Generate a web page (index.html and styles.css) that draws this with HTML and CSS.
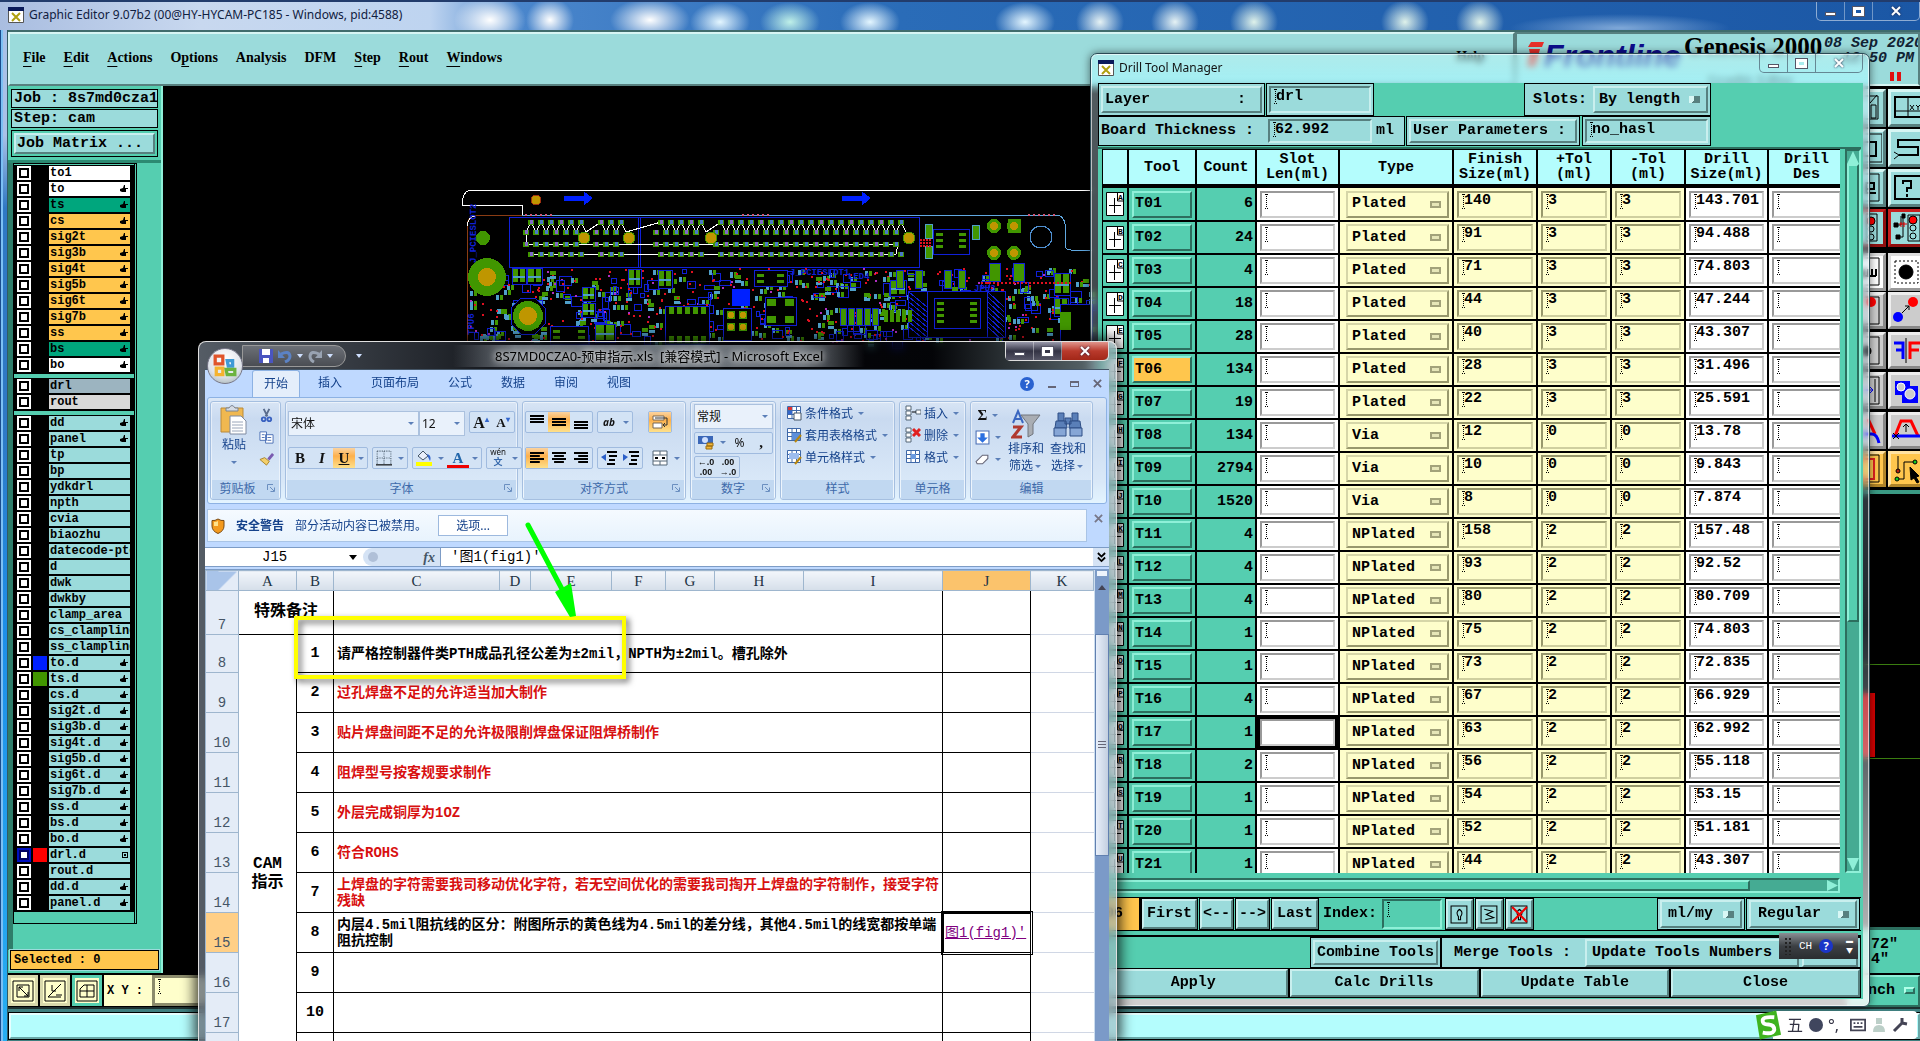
FILE: index.html
```html
<!DOCTYPE html>
<html lang="zh-CN">
<head>
<meta charset="utf-8">
<title>Graphic Editor</title>
<link rel="stylesheet" href="styles.css">
</head>
<body>
<svg class="defs" aria-hidden="true">
  <symbol id="app" viewBox="0 0 16 16"><path fill="#fff" stroke="#555" d="M.5.5h15v15H.5z"/><path fill="#0a1a5a" d="M0 0h16v4H0z"/><path stroke="#b0a010" stroke-width="2" d="M4 6l8 8M12 6l-8 8"/></symbol>
  <symbol id="hand" viewBox="0 0 8 8"><path d="M0 4l3-1 1-3h1v3h3v1H6v3H2L0 6z"/></symbol>
  <symbol id="launch" viewBox="0 0 8 8"><path fill="none" stroke="#6b8fc0" d="M.5 6V.5H6M3 3l4 4M7.500 3.500v4h-4"/></symbol>
  <symbol id="table" viewBox="0 0 16 16"><path fill="#fff" stroke="#3f68a8" d="M1.500 1.500h13v12h-13zM1.500 5.500h13M1.500 9.500h13M6 1.500v12M10.500 1.500v12"/></symbol>
  <symbol id="cross" viewBox="0 0 10 10"><path stroke="currentColor" stroke-width="2" d="M1 1l8 8M9 1L1 9"/></symbol>
</svg>

<main class="editor">
  <header class="titlebar">
    <svg class="app"><use href="#app"/></svg>
    <h1>Graphic Editor 9.07b2 (00@HY-HYCAM-PC185 - Windows, pid:4588)</h1>
    <div class="winctl"><button aria-label="Minimize"><i class="min"></i></button><button aria-label="Maximize"><i class="max"></i></button><button class="close" aria-label="Close"><svg><use href="#cross"/></svg></button></div>
  </header>
  <div class="menurow">
    <nav class="menubar">
      <button><u>F</u>ile</button><button><u>E</u>dit</button><button><u>A</u>ctions</button><button>O<u>p</u>tions</button><button>Analysis</button><button>DFM</button><button><u>S</u>tep</button><button><u>R</u>out</button><button><u>W</u>indows</button><button class="help">Help</button>
    </nav>
    <div class="brand">
      <span class="logo"><svg viewBox="0 0 18 26"><path fill="#e8302a" d="M5 0h13l-2 5H2zM3 7h11L9 25H1l3-13z"/></svg>Frontline</span>
      <span class="product"><b>Genesis 2000</b><small>Graphic Editor</small></span>
      <span class="clock">08 Sep 2020<br>&nbsp;&nbsp;12:50 PM<i></i></span>
    </div>
  </div>
  <div class="work">
    <aside class="left">
      <div class="job">
        <p>Job : 8s7md0cza1</p><p>Step: cam</p>
        <div><button>Job Matrix ...</button></div>
      </div>
      <div class="layerwrap"><div class="layers" id="layers"></div></div>
      <p class="selected">Selected : 0</p>
    </aside>
    <svg class="board" id="board" viewBox="163 86 1684 887" preserveAspectRatio="xMinYMin slice" shape-rendering="crispEdges"></svg>
    <form class="coords">
      <button type="button" aria-label="Snap"><svg viewBox="0 0 22 22"><path d="M1 1h20v20H1zM5 5h12v12H5zM7 7l9 9M7 11V7h4M16 12v4h-4"/></svg></button>
      <button type="button" aria-label="Angle"><svg viewBox="0 0 22 22"><path d="M1 1h20v20H1zM4 17L17 4M4 17h13M8 5v6h4M12 15h6"/></svg></button>
      <button type="button" class="on" aria-label="Grid"><svg viewBox="0 0 22 22"><path d="M1 1h20v20H1zM4 17V9l4-4h10v12zM4 11h14M11 5v12"/></svg></button>
      <label for="xy">X Y :</label><input id="xy" class="beam">
    </form>
    <aside class="right">
      <div class="tools">
        <button aria-label="Zoom"><svg viewBox="0 0 30 30"><path d="M3 3h23v23H3zM18 10l7-8M19 12h5v13h-5z"/></svg></button>
        <button aria-label="Grid XY"><svg viewBox="0 0 30 30"><path stroke-width="2" d="M3 4h26v20H3z"/><path d="M3 18h26M16 4v20M18 12l4 5M22 12l-4 5M24 12l2 2 2-2M26 14v3"/></svg></button>
        <button aria-label="Frame"><svg viewBox="0 0 30 30"><path d="M1 1h29v28H1z"/><path stroke-width="2" d="M10 9h14v14H10z"/></svg></button>
        <button aria-label="Measure"><svg viewBox="0 0 30 30"><path stroke-width="2" d="M28 7H6v7h20v8H7"/><path d="M29 2v5h-5M2 19l5 3-5 4"/></svg></button>
        <button aria-label="Edit"><svg viewBox="0 0 30 30"><path d="M1 1h26v27H1z"/><path stroke-width="2" d="M12 20h12M14 16h8V10h-8v10"/></svg></button>
        <button aria-label="Help"><svg viewBox="0 0 30 30"><path stroke-width="2" d="M3 3h26v23H3zM11 11V8h8v7h-4v4M15 21v3"/></svg></button>
        <button class="red" aria-label="Signals"><svg viewBox="0 0 30 30"><path d="M14 1h11v27H14z"/><circle cx="19" cy="8" r="4" fill="#f00"/><circle cx="19" cy="16" r="3"/><circle cx="19" cy="24" r="3"/></svg></button>
        <button class="red" aria-label="Net signals"><svg viewBox="0 0 30 30"><path d="M4 12h5V3M6 24h5V4M16 2h12v26H16z"/><path stroke="#d00" d="M7 11h8M9 14V9M12 14V9"/><path fill="#000" d="M2 10h4v4H2zM4 22h4v4H4zM10 1h3v4h-3z"/><circle cx="21" cy="7" r="4" fill="#f00"/><circle cx="21" cy="15" r="3"/><circle cx="21" cy="23" r="3"/></svg></button>
        <button class="white gap" aria-label="Text"><svg viewBox="0 0 30 30"><path d="M1 1h26v27H1z"/><path stroke-width="2" d="M4 19V12M8 19V12M12 19V12M16 19V12M20 19V12M24 19V12M4 19h20"/></svg></button>
        <button class="white gap" aria-label="Pad"><svg viewBox="0 0 30 30"><path stroke-dasharray="2 2" d="M3 4h23v22H3z"/><circle cx="14" cy="15" r="7" fill="#000"/></svg></button>
        <button class="gray" aria-label="Move"><svg viewBox="0 0 30 30"><path d="M1 1h26v27H1z"/><circle cx="19" cy="6" r="5" fill="#f00" stroke="none"/></svg></button>
        <button class="gray" aria-label="Copy"><svg viewBox="0 0 30 30"><path d="M10 17l7-7M13 10h4v4"/><circle cx="21" cy="6" r="5" fill="#f00" stroke="none"/><circle cx="6" cy="21" r="5" fill="#00f" stroke="none"/></svg></button>
        <button class="gray" aria-label="Rotate"><svg viewBox="0 0 30 30"><path d="M1 1h26v27H1z"/><circle cx="14" cy="15" r="5" fill="#000"/></svg></button>
        <button class="gray" aria-label="Mirror"><svg viewBox="0 0 30 30"><path d="M14 2v25"/><path stroke="#00f" stroke-width="3" d="M2 7h9v16M4 14h7"/><path stroke="#f00" stroke-width="3" d="M28 7H18v16M18 14h9"/></svg></button>
        <button class="gray" aria-label="Stretch"><svg viewBox="0 0 30 30"><path d="M1 1h26v27H1zM23 3v23"/><path stroke="#00f" d="M10 14h11M17 10l4 4-4 4"/></svg></button>
        <button class="gray" aria-label="Resize"><svg viewBox="0 0 30 30"><path fill="#00f" stroke="none" d="M3 5h15v5h8v17H10v-8H3z"/><circle cx="9" cy="11" r="4" fill="#ccc" stroke="#fff"/><circle cx="18" cy="18" r="5" fill="#ccc" stroke="#fff"/></svg></button>
        <button class="gray" aria-label="Curve"><svg viewBox="0 0 30 30"><path stroke="#f00" stroke-width="3" d="M16 3l7 15"/><path stroke="#00f" stroke-width="3" d="M10 18h10q5 0 7 9"/></svg></button>
        <button class="gray" aria-label="Bridge"><svg viewBox="0 0 30 30"><path stroke="#f00" stroke-width="3" d="M3 20L9 5h10l7 15"/><path stroke="#00f" stroke-width="3" d="M0 20h30"/><path d="M14 16V9M11 11l3-3 3 3M1 17l6 6M7 17l-6 6"/></svg></button>
        <button class="orange" aria-label="Select frame"><svg viewBox="0 0 30 30"><path d="M1 1h26v27H1z"/><path stroke="#e02020" stroke-width="2" d="M6 5h16v20H6z"/></svg></button>
        <button class="orange" aria-label="Select net"><svg viewBox="0 0 30 30"><path d="M6 2v15M5 25h7V8h10"/><circle cx="6" cy="17" r="2" fill="#b02010"/><circle cx="5" cy="25" r="2" fill="#1c2"/><circle cx="23" cy="8" r="2" fill="#1c2"/><path fill="#000" d="M18 13l9 9-3 1 3 5-2 1-3-5-3 2z"/></svg></button>
      </div>
      <svg class="rest" viewBox="0 0 73 433" preserveAspectRatio="xMinYMin slice"><path stroke="#3a7d10" d="M0 170.500h73M0 264.500h73"/><path fill="#d40000" d="M0 199h28v64H0z"/></svg>
      <div class="info"><p>72"<br>4"</p><button>nch <i></i></button></div>
    </aside>
  </div>
  <footer class="status"><div></div></footer>
</main>

<section class="drill" aria-label="Drill Tool Manager">
  <header class="titlebar">
    <svg class="app"><use href="#app"/></svg><h2>Drill Tool Manager</h2>
    <div class="winctl"><button aria-label="Minimize"><i class="min"></i></button><button aria-label="Maximize"><i class="max"></i></button><button class="close" aria-label="Close"><svg><use href="#cross"/></svg></button></div>
  </header>
  <div class="dbody">
    <div class="prow">
      <div class="box w168"><button class="btn full split"><span>Layer</span><span>:</span></button></div>
      <div class="box w108"><input class="beam" value="drl" aria-label="Layer"></div>
      <div class="box w187"><label for="slots">Slots:</label><select id="slots"><option>By length</option></select></div>
    </div>
    <div class="prow second">
      <div class="box w308"><label for="thick">Board Thickness :</label><input id="thick" class="beam" value="62.992"><span>ml</span></div>
      <div class="box w175"><button class="btn full">User Parameters :</button></div>
      <div class="box w132"><input class="beam" value="no_hasl" aria-label="User parameters"></div>
    </div>
    <div class="tablearea">
      <div class="clip">
        <table class="tt">
          <colgroup><col class="c1"><col class="c2"><col class="c3"><col class="c4"><col class="c5"><col class="c6"><col class="c7"><col class="c7"><col class="c4"><col class="c9"></colgroup>
          <thead><tr><th></th><th>Tool</th><th>Count</th><th>Slot<br>Len(ml)</th><th>Type</th><th>Finish<br>Size(ml)</th><th>+Tol<br>(ml)</th><th>-Tol<br>(ml)</th><th>Drill<br>Size(ml)</th><th>Drill<br>Des</th></tr></thead>
          <tbody id="toolrows"></tbody>
        </table>
      </div>
      <div class="vs"><b class="up"></b><b class="thumb"></b><b class="rail"></b><b class="down"></b></div>
      <div class="hs"><b class="thumb"></b><b class="rt"></b></div>
    </div>
    <div class="nav">
      <span class="cur">T06</span><button class="btn">First</button><button class="btn ar">&lt;--</button><button class="btn ar">--&gt;</button><button class="btn">Last</button>
      <label for="idx">Index:</label><input id="idx" class="beam">
      <button class="btn ic" aria-label="Light"><svg viewBox="0 0 18 18"><path d="M1 1h15v16H1zM9 4q-4 3-1 7v3h2v-3q3-4-1-7"/></svg></button>
      <button class="btn ic" aria-label="Undo"><svg viewBox="0 0 18 18"><path d="M1 1h15v16H1zM4 4l8 2-6 3 7 3-8 2"/></svg></button>
      <button class="btn ic" aria-label="Off"><svg viewBox="0 0 18 18"><path d="M1 1h15v16H1zM9 4q-4 3-1 7v3h2v-3q3-4-1-7"/><path stroke="#e00" stroke-width="2" d="M2 2l14 14M16 2L2 16"/></svg></button>
      <div class="box push"><select aria-label="Units"><option>ml/my</option></select></div>
      <div class="box reg"><select aria-label="Mode"><option>Regular</option></select></div>
    </div>
    <div class="merge"><div class="box w131"><button class="btn full">Combine Tools</button></div><div class="box mg"><span>Merge Tools :</span><button class="btn upd">Update Tools Numbers</button><button class="btn rest2" aria-label="More">&nbsp;</button></div></div>
    <div class="actions"><button class="btn">Apply</button><button class="btn">Calc Drills</button><button class="btn">Update Table</button><button class="btn">Close</button></div>
  </div>
</section>

<section class="excel" aria-label="Microsoft Excel">
  <header class="xtitle">
    <div class="qat">
      <svg viewBox="0 0 14 14"><path fill="#4a55c0" d="M0 0h14v14H0z"/><path fill="#fff" d="M3 0h8v6H3zM4 9h6v5H4z"/></svg>
      <svg viewBox="0 0 14 14"><path fill="none" stroke="#5b82c4" stroke-width="3" d="M3 5q8-4 9 2 0 4-5 6"/><path fill="#5b82c4" d="M0 1v8h7z"/></svg><i class="dn"></i>
      <svg viewBox="0 0 14 14"><path fill="none" stroke="#99a3b2" stroke-width="3" d="M11 5Q3 1 2 7q0 4 4 6"/><path fill="#99a3b2" d="M14 1v8H7z"/></svg><i class="dn"></i><i class="dn more"></i>
    </div>
    <h2>8S7MD0CZA0-预审指示.xls&nbsp; [兼容模式] - Microsoft Excel</h2>
    <div class="winctl"><button aria-label="Minimize"><i class="min"></i></button><button aria-label="Maximize"><i class="max"></i></button><button class="close" aria-label="Close"><svg><use href="#cross"/></svg></button></div>
  </header>
  <button class="orb" aria-label="Office"><svg viewBox="0 0 22 22"><g fill="none" stroke-width="3"><path stroke="#e0542a" d="M2 2h7v7H2z"/><path stroke="#3f9ad6" d="M13 6h5v5h-4z"/><path stroke="#f5b32e" d="M3 13h6v6H3z"/><path stroke="#6cb33f" d="M12 14h8v5h-7z"/></g></svg></button>
  <div class="xbody">
    <nav class="tabs"><button class="on">开始</button><button>插入</button><button>页面布局</button><button>公式</button><button>数据</button><button>审阅</button><button>视图</button>
      <span class="docctl"><i class="q">?</i><i class="m"></i><i class="r"></i><svg><use href="#cross"/></svg></span></nav>
    <div class="ribbon">
      <div class="grp g1"><div class="in">
        <button class="big paste"><svg viewBox="0 0 30 32"><path fill="#f0b850" stroke="#b98a3a" d="M2 4h22v24H2z"/><path fill="#d5dbe4" stroke="#7b8492" d="M7 7V4h3q3-5 6 0h3v3z"/><path fill="#fff" stroke="#7e8aa0" d="M11 12h11l5 5v13H11z"/><path stroke="#9aa6ba" d="M13 18h11M13 21h11M13 24h11M13 27h11"/></svg>粘贴<i class="dd"></i></button>
        <div class="stack"><button aria-label="剪切"><svg viewBox="0 0 16 16"><path stroke="#5a6c8c" stroke-width="2" d="M5 1l4 8M11 1L7 9"/><g fill="none" stroke="#3a62c0" stroke-width="2"><circle cx="5" cy="12" r="2"/><circle cx="11" cy="12" r="2"/></g></svg></button><button aria-label="复制"><svg viewBox="0 0 16 16"><path fill="#fff" stroke="#4a6fb5" d="M1 2h7v9H1zM7 5h8v9H7z"/><path stroke="#4a6fb5" d="M9 8h4M9 11h4M3 5h3M3 8h3"/></svg></button><button aria-label="格式刷"><svg viewBox="0 0 16 16"><path fill="#f3cf6a" stroke="#a8832b" d="M1 8l7 6 3-4-5-4z"/><path stroke="#7a5bb0" stroke-width="3" d="M10 8l5-6"/></svg></button></div>
      </div><p>剪贴板<svg><use href="#launch"/></svg></p></div>
      <div class="grp g2"><div class="in col">
        <div class="rw"><span class="combo f">宋体<i class="dd"></i></span><span class="combo s">12<i class="dd"></i></span><span class="set"><button class="ser g">A<sup>▴</sup></button><button class="ser k">A<sup>▾</sup></button></span></div>
        <div class="rw"><span class="set"><button class="ser">B</button><button class="ser it">I</button><button class="ser on un">U</button><button class="n"><i class="dd"></i></button></span>
          <span class="set"><button aria-label="边框"><svg viewBox="0 0 14 14"><path stroke="#567" stroke-dasharray="1 1" fill="none" d="M1 1h12v11M1 1v11M7 1v11M1 7h12"/><path stroke="#000" d="M0 13h14"/></svg></button><button class="n"><i class="dd"></i></button></span>
          <span class="set"><button aria-label="填充"><svg viewBox="0 0 16 16"><path fill="#e8eefa" stroke="#456" d="M2 6l5-5 5 5-5 4z"/><path fill="#36c" d="M11 4q5 1 3 7l-2-4z"/><path fill="#ff0" d="M0 12h16v4H0z"/></svg></button><button class="n"><i class="dd"></i></button><button class="ser fc">A</button><button class="n"><i class="dd"></i></button></span>
          <span class="set"><button class="wen"><span>wén</span><b>文</b></button><button class="n"><i class="dd"></i></button></span></div>
      </div><p>字体<svg><use href="#launch"/></svg></p></div>
      <div class="grp g3"><div class="in col">
        <div class="rw"><span class="set"><button class="ln t" aria-label="顶端对齐"><i></i></button><button class="ln on" aria-label="垂直居中"><i></i></button><button class="ln b" aria-label="底端对齐"><i></i></button></span><span class="set"><button class="or">ab</button><button class="n"><i class="dd"></i></button></span><span class="set solo"><button class="on" aria-label="自动换行"><svg viewBox="0 0 16 16"><path fill="#fff" stroke="#765" d="M1 2h11v4H1zM1 9h9v5H1z"/><path fill="none" stroke="#333" d="M3 4h12v7h-4M13 9l-2 2 2 2"/></svg></button></span></div>
        <div class="rw"><span class="set"><button class="ln on l5" aria-label="左对齐"><i></i></button><button class="ln l5 c" aria-label="居中"><i></i></button><button class="ln l5 r" aria-label="右对齐"><i></i></button></span><span class="set"><button aria-label="减少缩进"><svg viewBox="0 0 16 16"><path stroke="#000" stroke-width="2" d="M6 2h10M8 6h8M8 10h6M6 14h8"/><path fill="#2b5fc8" d="M5 4v7L0 7z"/></svg></button><button aria-label="增加缩进"><svg viewBox="0 0 16 16"><path stroke="#000" stroke-width="2" d="M6 2h10M8 6h8M8 10h6M6 14h8"/><path fill="#2b5fc8" d="M0 4v7l5-4z"/></svg></button></span><span class="set solo no2"><button aria-label="合并"><svg viewBox="0 0 16 16"><path fill="#fff" stroke="#567" d="M1 1h14v14H1zM1 5h14M1 11h14M8 1v4M8 11v4"/><path stroke="#000" stroke-width="2" d="M3 8h3M10 8h3"/></svg></button><button class="n"><i class="dd"></i></button></span></div>
      </div><p>对齐方式<svg><use href="#launch"/></svg></p></div>
      <div class="grp g4"><div class="in col tight">
        <span class="combo w">常规<i class="dd"></i></span>
        <span class="set wide"><button aria-label="货币"><svg viewBox="0 0 16 16"><path fill="#3b67b8" d="M0 1h15v8H0z"/><circle cx="7" cy="5" r="3" fill="#cfe0ff"/><path fill="#f1b73a" stroke="#9b6d10" d="M9 8h6v3H9zM8 11h6v3H8z"/></svg></button><button class="n"><i class="dd"></i></button><button>%</button><button class="ser">,</button></span>
        <span class="set fit"><button class="dec">←.0<br>.00</button><button class="dec">.00<br>→.0</button></span>
      </div><p>数字<svg><use href="#launch"/></svg></p></div>
      <div class="grp g5"><div class="in col list">
        <button><svg viewBox="0 0 16 16"><use href="#table"/><path fill="#d33" d="M2 2h4v3H2z"/><path fill="#36c" d="M2 6h4v3H2z"/><path fill="#fff" stroke="#456" d="M8 8h7v7H8z"/></svg>条件格式<i class="dd"></i></button>
        <button><svg viewBox="0 0 16 16"><use href="#table"/><path fill="#5d8fdb" d="M6 6h8v7H6z"/><path stroke="#b8860b" stroke-width="2" d="M9 15l6-7"/></svg>套用表格格式<i class="dd"></i></button>
        <button><svg viewBox="0 0 16 16"><use href="#table"/><path fill="#9dbdee" d="M3 4h10v6H3z"/><path stroke="#b8860b" stroke-width="2" d="M9 15l6-7"/></svg>单元格样式<i class="dd"></i></button>
      </div><p>样式</p></div>
      <div class="grp g6"><div class="in col list">
        <button><svg viewBox="0 0 16 16"><path fill="#fff" stroke="#567" d="M1 1h5v4H1zM1 6h5v4H1zM1 11h5v4H1zM11 5h5v4h-5z"/><path stroke="#000" d="M7 7h4"/></svg>插入<i class="dd"></i></button>
        <button><svg viewBox="0 0 16 16"><path fill="#fff" stroke="#567" d="M1 1h5v4H1zM1 6h5v4H1zM1 11h5v4H1z"/><path stroke="#e02020" stroke-width="3" d="M8 2l7 7M15 2L8 9"/></svg>删除<i class="dd"></i></button>
        <button><svg viewBox="0 0 16 16"><use href="#table"/><path fill="#6b9be0" d="M6 5h5v5H6z"/></svg>格式<i class="dd"></i></button>
      </div><p>单元格</p></div>
      <div class="grp g7"><div class="in">
        <div class="stack ed"><button class="ser">Σ<i class="dd"></i></button><button aria-label="填充"><svg viewBox="0 0 14 14"><path fill="#fff" stroke="#4a6fb5" d="M1 1h12v12H1z"/><path fill="#2b6fe0" d="M5 3h4v4h3l-5 5-5-5h3z"/></svg><i class="dd"></i></button><button aria-label="清除"><svg viewBox="0 0 14 14"><path fill="#fff" stroke="#667" d="M1 9l6-6h5v3l-5 5H2z"/></svg><i class="dd"></i></button></div>
        <button class="big"><svg viewBox="0 0 30 30"><path fill="none" stroke="#3b67c0" stroke-width="2" d="M2 14L7 2l5 12M4 10h6"/><path fill="none" stroke="#b03a30" stroke-width="3" d="M2 18h8L2 28h9"/><path fill="#a9adb3" stroke="#70757c" d="M10 6h19l-7 9v10l-5 3V15z"/></svg>排序和<br>筛选<i class="dd"></i></button>
        <button class="big"><svg viewBox="0 0 30 30"><g fill="#5a7fb8" stroke="#2f4f86"><path d="M5 4h6v8H5zM19 4h6v8h-6z"/><path d="M3 12h10l1 7H2zM17 12h10l1 7H16zM12 9h6v6h-6z"/><path fill="#86a6d6" d="M1 19h12v8H1zM17 19h12v8H17z"/></g></svg>查找和<br>选择<i class="dd"></i></button>
      </div><p>编辑</p></div>
    </div>
    <div class="warn"><div><svg viewBox="0 0 14 16"><path fill="#f39a1e" stroke="#7a4a10" d="M7 1q3 2 6 1.500V8q0 5-6 7.500Q1 13 1 8V2.500Q4 3 7 1z"/><path fill="#ffe28a" d="M3 4q3 0 4-1v5H3z"/></svg><b>安全警告</b><span>部分活动内容已被禁用。</span><button>选项...</button></div><svg class="x"><use href="#cross"/></svg></div>
    <div class="fbar"><span class="name">J15<i></i></span><span class="fx"><b></b><em>fx</em></span><input value="'图1(fig1)'" aria-label="编辑栏"><button aria-label="展开"><svg viewBox="0 0 10 12"><path stroke="#000" stroke-width="2" d="M1 1l4 4 4-4M1 6l4 4 4-4"/></svg></button></div>
    <div class="sheetwrap">
      <table class="sheet">
        <colgroup><col class="k0"><col class="ka"><col class="kb"><col class="kc"><col class="kd"><col class="ke"><col class="kf"><col class="kg"><col class="kh"><col class="ki"><col class="kj"><col class="kk"></colgroup>
        <thead><tr><th class="cn"></th><th>A</th><th>B</th><th>C</th><th>D</th><th>E</th><th>F</th><th>G</th><th>H</th><th>I</th><th class="hot">J</th><th>K</th></tr></thead>
        <tbody>
          <tr class="h44"><th>7</th><td colspan="2" class="cap">特殊备注</td><td colspan="7"></td><td></td><td class="off"></td></tr>
          <tr class="h38"><th>8</th><td rowspan="12" class="cap cam">CAM<br>指示</td><td class="no">1</td><td colspan="7">请严格控制器件类PTH成品孔径公差为±2mil，NPTH为±2mil。槽孔除外</td><td></td><td class="off"></td></tr>
          <tr><th>9</th><td class="no">2</td><td colspan="7" class="rd">过孔焊盘不足的允许适当加大制作</td><td></td><td class="off"></td></tr>
          <tr><th>10</th><td class="no">3</td><td colspan="7" class="rd">贴片焊盘间距不足的允许极限削焊盘保证阻焊桥制作</td><td></td><td class="off"></td></tr>
          <tr><th>11</th><td class="no">4</td><td colspan="7" class="rd">阻焊型号按客规要求制作</td><td></td><td class="off"></td></tr>
          <tr><th>12</th><td class="no">5</td><td colspan="7" class="rd">外层完成铜厚为1OZ</td><td></td><td class="off"></td></tr>
          <tr><th>13</th><td class="no">6</td><td colspan="7" class="rd">符合ROHS</td><td></td><td class="off"></td></tr>
          <tr><th>14</th><td class="no">7</td><td colspan="7" class="rd">上焊盘的字符需要我司移动优化字符，若无空间优化的需要我司掏开上焊盘的字符制作，接受字符<br>残缺</td><td></td><td class="off"></td></tr>
          <tr><th class="hot">15</th><td class="no">8</td><td colspan="7">内层4.5mil阻抗线的区分：附图所示的黄色线为4.5mil的差分线，其他4.5mil的线宽都按单端<br>阻抗控制</td><td class="act"><a href="#fig1">图1(fig1)'</a></td><td class="off"></td></tr>
          <tr><th>16</th><td class="no">9</td><td colspan="7"></td><td></td><td class="off"></td></tr>
          <tr><th>17</th><td class="no">10</td><td colspan="7"></td><td></td><td class="off"></td></tr>
          <tr><th></th><td class="no"></td><td colspan="7"></td><td></td><td class="off"></td></tr>
          <tr><th></th><td class="no"></td><td colspan="7"></td><td></td><td class="off"></td></tr>
        </tbody>
      </table>
      <div class="xs"><b class="split"></b><i></i><b class="th"></b></div>
    </div>
  </div>
</section>

<div class="mark"></div>
<svg class="arrow" viewBox="0 0 60 100"><path stroke="#0f0" stroke-width="5" stroke-linecap="round" d="M10 7l35 66"/><path fill="#0f0" d="M37 74l16-9 5 33-6 1z"/></svg>

<div class="lang"><i class="grip"></i><span>CH</span><b>?</b><em>▬<br>▼</em></div>
<div class="ime"><svg class="s" viewBox="0 0 28 30"><path fill="#3fb31f" d="M1 5L22 0l5 25L5 30z"/><path fill="none" stroke="#fff" stroke-width="4" d="M20 7q-13-1-12 4 0 3 6 3.500T20 20q-1 5-12 3"/></svg><span>五</span><i class="moon"></i><span>°,</span><svg viewBox="0 0 18 14"><path fill="none" stroke="#445" stroke-width="2" d="M1 1h16v12H1zM4 5h2M8 5h2M12 5h2M4 9h10"/></svg><svg viewBox="0 0 14 16"><path fill="#bccfc8" d="M4 1h6v6H4zM1 15q0-7 6-7t6 7z"/></svg><svg viewBox="0 0 16 16"><path fill="none" stroke="#445" stroke-width="3" d="M2 14l8-8M10 1v5l5 1"/></svg></div>
<script src="app.js"></script>
</body>
</html>
```

FILE: styles.css
```css
*{box-sizing:border-box}
:root{--teal:#55ceb0;--cyan:#9bdbdb;--pale:#fefecb;--ice:#b4fdfd;--gold:#ffc64d;--mono:"Liberation Mono","Noto Sans CJK SC",monospace;--ui:"Noto Sans","Noto Sans CJK SC",sans-serif}
html,body{height:100%}
body{margin:0;overflow:hidden;background:#1d5fae;font:bold 15px/18px var(--mono);color:#000}
button,input,select{font:inherit;color:inherit;margin:0;padding:0;border:0;border-radius:0;background:none;appearance:none;outline:0;min-width:0}
h1,h2,p{margin:0;font:inherit}
svg{fill:none;display:block;flex:none}
.defs{position:absolute;width:0;height:0}
.titlebar{display:flex;align-items:center;flex:none;font:12px/16px var(--ui);color:#111}
.titlebar .app{width:16px;height:16px;margin-right:5px}
.winctl{display:flex;margin-left:auto;align-self:flex-start;height:19px;border:1px solid #ffffff80;border-top:0;border-radius:0 0 5px 5px}
.winctl button{width:28px;display:flex;align-items:center;justify-content:center;border-right:1px solid #ffffff60}
.winctl .close{width:46px;border:0}
.winctl svg{width:10px;height:10px;color:#fff;filter:drop-shadow(0 0 1px #224)}
.min{width:11px;height:4px;background:#fff;border:1px solid #556;margin-top:6px}
.max{width:11px;height:9px;border:3px solid #fff;outline:1px solid #556}

.editor{height:100%;display:flex;flex-direction:column;padding-left:8px;overflow:hidden;background:linear-gradient(90deg,#1a4c8e 0 1px,#7cc0f4 1px 3px,transparent 3px 7px,#315a63 7px 8px,transparent 8px),linear-gradient(#a9c1e8 0 13%,#2f78c4 20% 40%,#1e8ee8 60%,#27aef2 100%)}
.editor>.titlebar{height:30px;margin-left:-8px;padding:0 0 2px 8px;border-top:2px solid #223c6c;background:radial-gradient(ellipse 24px 22px at 1100px 20px,#e6f2f4,transparent),radial-gradient(ellipse 24px 22px at 1175px 20px,#e6f2f4,transparent),radial-gradient(ellipse 24px 22px at 1254px 20px,#dff2ea,transparent),radial-gradient(ellipse 24px 22px at 1405px 20px,#dff2ea,transparent),radial-gradient(ellipse 24px 22px at 1480px 20px,#dff2ea,transparent),radial-gradient(ellipse 110px 14px at 1620px 26px,#7fa8d8,transparent),radial-gradient(ellipse 40px 22px at 650px 18px,#fff,transparent),radial-gradient(ellipse 30px 20px at 1025px 20px,#e4f6ff,transparent),radial-gradient(ellipse 30px 20px at 870px 20px,#e4f6ff,transparent),radial-gradient(ellipse 30px 20px at 790px 20px,#bff0e8,transparent),radial-gradient(ellipse 30px 20px at 720px 20px,#e4f6ff,transparent),radial-gradient(ellipse 24px 22px at 550px 18px,#fff,transparent),radial-gradient(ellipse 36px 24px at 490px 18px,#fff,transparent),linear-gradient(90deg,#a9bde0,#c8d8ef 200px,#bed4f0 430px,#4a86cc 520px,#2a6cb8 900px,#1b57a5)}
.editor>.titlebar h1{color:#102040}
.menurow{display:flex;height:56px;flex:none;background:var(--cyan);border-top:2px solid #3f6c6c;font:bold 14px/18px "Liberation Serif",serif}
.menubar{flex:1;display:flex;align-items:center;gap:18px;padding:0 0 3px 13px;border:2px solid;border-color:#d6f5f3 #57807f #57807f #d6f5f3}
.menubar button{text-underline-offset:4px}
.menubar .help{margin:14px 28px 0 auto;align-self:flex-start}
.brand{width:405px;display:flex;border:2px solid;border-color:#57807f #57807f #d6f5f3 #57807f;padding:4px 0 0 9px;white-space:nowrap;overflow:hidden}
.logo{display:flex;font:italic bold 32px/36px "Liberation Sans",sans-serif;color:#0d0d8c;width:158px;flex:none}
.logo svg{width:18px;height:26px;margin-top:4px}
.product{display:flex;flex-direction:column;width:140px;flex:none}
.product b{font-size:25px;line-height:18px}
.product small{font-size:13px;line-height:16px;padding:16px 0 0 24px}
.clock{font:italic bold 15px/15px var(--mono);color:#123;margin-top:-2px}
.clock i{display:block;width:11px;height:9px;margin:6px 0 0 66px;border:solid #e01010;border-width:0 4px}
.work{flex:1;min-height:0;display:grid;grid-template:minmax(0,1fr) 34px/155px minmax(0,1fr) 73px;background:#000}
.left{background:var(--teal);display:flex;flex-direction:column;min-height:0;border-right:2px solid #8ff0d8}
.job{padding:3px;border-bottom:3px solid #2c8a72}
.job p,.job div{border:1px solid #000;background:var(--cyan);height:19px;padding-left:2px;white-space:nowrap;overflow:hidden}
.job p+p{margin-top:1px}
.job div{background:var(--teal);height:27px;margin-top:2px;padding:2px}
.job button{width:100%;height:100%;background:var(--cyan);border:2px solid;border-color:#c9efee #57807f #57807f #c9efee;text-align:left;padding-left:1px}
.layerwrap{flex:1;border-left:5px solid #2f7d6a}
.layers{width:124px;height:761px;border:1px solid #000;border-right:3px double #000;padding:1px 0;display:flex;flex-direction:column;gap:4px;font-size:12px;line-height:14px}
.grpx{background:#000;padding:1px 0 0}
.layer{display:grid;grid-template-columns:14px 16px 81px;gap:1px;padding:0 3px 2px;height:16px;background:#000}
.layer input{width:14px;height:14px;background:#fff;border:2px solid #fff;box-shadow:inset 0 0 0 2px #000}
.layer input:checked{border-color:#0010c0;box-shadow:inset 0 0 0 2px #000060}
.layer i{margin:0 1px;background:var(--sw,#000)}
.layer span{background:var(--bg,var(--cyan));display:flex;justify-content:space-between;align-items:center;overflow:hidden;white-space:nowrap;padding-left:1px}
.layer svg{width:8px;height:8px;fill:#000;margin-right:2px}
.layer b.sq{width:6px;height:6px;border:3px double #000;margin-right:2px}
.selected{margin:0 2px 3px 2px;background:var(--gold);border:1px solid #000;outline:1px solid var(--cyan);height:20px;padding-left:3px;font-size:12px}
.board{grid-area:1/2;width:100%;height:100%}
.coords{grid-area:2/1/3/3;display:flex;background:var(--pale);width:400px;border-top:2px solid #000;border-bottom:1px solid #000;align-items:stretch;font-size:12px}
.coords button{width:32px;border-right:2px solid #000;display:grid;place-items:center;box-shadow:inset 0 0 0 3px #d8d8ac}
.coords button.on{box-shadow:inset 0 0 0 3px var(--teal)}
.coords svg{width:22px;height:22px;stroke:#000}
.coords label{padding:7px 0 0 3px;width:48px}
.coords input{width:150px;border:3px solid #8c8c6c}
.right{grid-area:1/3/3/4;display:flex;flex-direction:column;overflow:hidden;min-height:0}
.tools{display:grid;grid-template-columns:38px 38px;grid-auto-rows:38px;gap:2px;background:#000;padding:3px 0 3px 1px;border-bottom:4px solid #3a9a84;flex:none}
.tools button{background:var(--cyan);border:3px solid;border-color:#d6f5f3 #57807f #57807f #d6f5f3;display:grid;place-items:center}
.tools svg{width:30px;height:30px;stroke:#000}
.tools .red{border-color:#c82020 #901010 #901010 #c82020}
.tools .white{background:#fff;border-color:#ddd #999 #999 #ddd}
.tools .gap{margin-top:4px;height:38px}
.tools .gray{background:#ccc;border-color:#eee #888 #888 #eee;margin-top:3px;height:37px}
.tools .orange{background:var(--gold);border-color:#ffe2a0 #b08428 #b08428 #ffe2a0;margin-top:2px}
.rest{flex:1;width:100%;min-height:0}
.info{height:80px;flex:none;background:var(--teal);border-top:3px solid #2c6e5e;text-align:left}
.info p{height:45px;padding:7px 0 0 24px;line-height:15px;border-bottom:2px solid #000}
.info button{width:100%;height:32px;border:2px solid;border-color:#8ff0d8 #2c6e5e #2c6e5e #8ff0d8;padding-left:19px;text-align:left;white-space:nowrap}
.info i{display:inline-block;width:11px;height:7px;border:2px solid;border-color:#b0ffe8 #2c6e5e #2c6e5e #b0ffe8}
.status{height:34px;flex:none;background:#3f7f7f;padding:4px 0 2px 1px;border-top:2px solid #1d3030}
.status div{height:100%;background:var(--ice);border:2px solid;border-color:#e6ffff #6aa8a8 #6aa8a8 #e6ffff;outline:1px solid #000}

.drill{position:absolute;left:1090px;top:53px;width:780px;height:954px;display:flex;flex-direction:column;padding:0 6px 7px 7px;border-radius:7px 7px 6px 6px;border:1px solid #2b4a55;background:linear-gradient(#c8ffff70,#a8f8ffb0 28px,#d8f4ff60 40px,#80a8c040 60%,#ffffffd0 99%);backdrop-filter:blur(3px);box-shadow:inset 0 0 0 1px #ffffffa0,0 0 8px #0008}
.drill>.titlebar{height:29px;padding-bottom:2px}
.drill h2{font-size:12px}
.drill .winctl,.drill .winctl button{border-color:#456a}
.dbody{flex:1;min-height:0;background:var(--teal);display:flex;flex-direction:column;padding:0 2px 1px 0;overflow:hidden}
.beam{background-image:repeating-linear-gradient(#000 0 1px,transparent 1px 2px),linear-gradient(90deg,#000 1px,transparent 1px 2px,#000 2px),linear-gradient(90deg,#000 1px,transparent 1px 2px,#000 2px);background-size:1px 14px,3px 1px,3px 1px;background-position:4px 1px,3px 1px,3px 15px;background-repeat:no-repeat;padding-left:5px}
.prow{display:flex;height:33px;flex:none}
.prow.second{height:30px}
.box{border:1px solid #000;background:var(--cyan);display:flex;align-items:center;padding:2px;flex:none}
.prow .box+.box{margin-left:1px}
.w168{width:167px}.w108{width:108px}.w187{width:187px}.w308{width:307px}.w175{width:174px}.w132{width:129px}.w131{width:131px}
.second .box+.w132{margin-left:2px}
.prow .box+.w187{margin-left:150px;padding-left:8px}
.box label{white-space:nowrap}
.btn{background:var(--cyan);border:2px solid;border-color:#c9efee #57807f #57807f #c9efee;height:28px;padding:0 3px;text-align:center;white-space:nowrap;overflow:hidden}
.full{width:100%;height:100%;text-align:left;padding:0 2px}
.full.split{display:flex;justify-content:space-between;align-items:center;padding-right:14px}
.prow input{width:100%;height:27px;border:2px solid;border-color:#57807f #c9efee #c9efee #57807f;padding-bottom:7px}
.second input{height:24px;padding-bottom:3px}
.w308 label{width:167px;flex:none}
.w308 .beam{width:104px}
.w308 span{padding-left:4px}
select{background:conic-gradient(#57807f 0 62%,#d8f7f5 0) calc(100% - 6px) 50%/11px 7px no-repeat var(--cyan);border:2px solid;border-color:#c9efee #57807f #57807f #c9efee;height:27px;padding:0 18px 0 4px}
.w187 select{flex:1;margin-left:6px}
.tablearea{flex:none;height:748px;margin-top:1px;display:grid;grid-template:724px 15px/738px 16px;column-gap:5px;row-gap:5px;padding-left:4px;border-top:2px solid #2c6e5e}
.clip{overflow:hidden;background:#000}
.tt{border-collapse:separate;border-spacing:0;table-layout:fixed;width:743px;margin-left:1px;background:var(--teal)}
.c1{width:26px}.c2{width:68px}.c3{width:60px}.c4{width:83px}.c5{width:114px}.c6{width:84px}.c7{width:74px}.c9{width:77px}
.tt th{height:37px;background:var(--ice);padding:0 2px;border-right:2px solid #000;border-bottom:2px solid #000;border-top:1px solid #000;line-height:15px}
.tt td{height:33px;padding:2px 3px;border-right:2px solid #000;border-bottom:2px solid #000;overflow:hidden}
.tt tbody tr:first-child td{border-top:2px solid #000;height:36px}
.tt td.n{text-align:right;padding-right:2px}
.tt td button{width:100%;height:27px;border:2px solid;border-color:#8ff0d8 #2c6e5e #2c6e5e #8ff0d8;text-align:left;padding-left:1px;display:block}
.tt td button.sel{background:var(--gold)}
.tt input{display:block;width:100%;height:27px;border:2px solid;border-color:#999 #ccc #ccc #999;padding-bottom:8px}
.tt .w{background-color:#fff}.tt .y{background:var(--pale)}
.tt .y input{border-color:#98986c #cfcf9f #cfcf9f #98986c}
.tt .foc{background-color:#000}.tt .foc input{background:#fff}
.tt .ty{padding-left:6px}
.tt select{display:block;width:100%;height:27px;background:linear-gradient(#e6e6b8,#e6e6b8) calc(100% - 8px) 50%/7px 3px no-repeat,linear-gradient(#a2a27a,#a2a27a) calc(100% - 6px) 50%/11px 7px no-repeat var(--pale);border-color:#d6d6a8 #98986c #98986c #d6d6a8}
.tt svg{width:18px;height:24px}
.vs,.hs{border:2px solid;border-color:#2c6e5e #8ff0d8 #8ff0d8 #2c6e5e;background:#45ab93;display:flex}
.vs{flex-direction:column}
.vs b,.hs b{display:block}
.vs .thumb{height:458px;background:var(--teal);border:2px solid;border-color:#8ff0d8 #2c6e5e #2c6e5e #8ff0d8}
.vs .rail{flex:1}
.up,.down{height:13px;background:#8ff0d8;clip-path:polygon(50% 0,100% 100%,0 100%)}
.down{clip-path:polygon(0 0,100% 0,50% 100%)}
.hs .thumb{width:646px;background:var(--teal);border:2px solid;border-color:#8ff0d8 #2c6e5e #2c6e5e #8ff0d8}
.hs .rt{width:11px;margin-left:auto;background:#8ff0d8;clip-path:polygon(0 0,100% 50%,0 100%)}
.nav{display:flex;align-items:center;height:34px;flex:none;margin:2px 0 0 2px;border:1px solid #000;border-right:0}
.nav .cur{width:40px;background:var(--gold);height:100%;padding:7px 16px 0 0;display:flex;justify-content:flex-end;border-right:2px solid #000}
.nav .btn{margin-left:1px;outline:1px solid #000;height:30px;margin-right:2px}
.nav .ar{width:33px;padding:0}
.nav label{padding:0 5px 0 3px}
.nav input{width:60px;height:30px;border:2px solid;border-color:#2c6e5e #8ff0d8 #8ff0d8 #2c6e5e;margin-right:3px}
.nav .ic{width:27px;padding:0 2px}
.nav .ic svg{width:19px;height:19px;stroke:#000}
.nav .box{height:32px;margin-right:1px}
.nav .box select{width:100%;height:28px}
.push{margin-left:auto;width:88px}
.reg{width:114px}
.nav .push select{padding-left:6px}
.nav .reg select{padding-left:7px}
.merge{display:flex;justify-content:flex-end;margin-top:4px;height:33px;flex:none;border-top:2px solid #000}
.mg{width:420px}
.mg span{padding-left:10px}.mg .upd{margin:0 3px 0 14px;width:214px;padding:0 5px;text-align:left}
.rest2{flex:1}
.actions{display:grid;grid-template-columns:repeat(4,1fr);gap:2px;background:#000;border:1px solid #000;height:30px;flex:none}

.excel{position:absolute;left:198px;top:341px;width:919px;bottom:0;display:flex;flex-direction:column;padding:0 7px 0 6px;border:1px solid #e0e0e0;border-bottom:0;border-radius:8px 8px 0 0;font:12px/17px var(--ui);background:linear-gradient(90deg,#68717cd0,#20242cb0 300px,#0a0c1480 400px,#0a0c1460 80%,#a0b8c0a0);backdrop-filter:blur(4px);box-shadow:0 0 14px 3px #000c}
.xtitle{height:27px;flex:none;display:flex;align-items:center}
.xtitle h2{font-size:13px;line-height:22px;margin-left:107px;padding:0 42px;color:#000;background:linear-gradient(90deg,transparent,#8a929ac0 15% 85%,transparent);text-shadow:0 0 6px #fff,0 0 8px #ddd}
.qat{display:flex;align-items:center;gap:5px;height:22px;margin-left:37px;padding:0 12px 0 16px;width:104px;border-radius:0 12px 12px 0;border:1px solid #999;background:linear-gradient(#6c7077,#4a4d53)}
.qat svg{width:14px;height:14px}
.dn{width:0;height:0;border:3px solid transparent;border-top:4px solid #cfe0ff;border-bottom:0;flex:none}
.dn.more{margin-left:18px}
.excel .winctl{border-color:#ddd}
.excel .winctl button{background:linear-gradient(#99a,#334 50%,#556)}
.excel .winctl .close{background:linear-gradient(#e0958c,#b93a2c 50%,#a22718);border-radius:0 0 5px 0}
.orb{position:absolute;left:8px;top:6px;width:36px;height:36px;border-radius:50%;background:radial-gradient(circle at 50% 30%,#fff,#dfe3ea 60%,#9aa);display:grid;place-items:center;border:1px solid #778;z-index:1}
.orb svg{width:24px;height:24px}
.xbody{flex:1;min-height:0;display:flex;flex-direction:column;background:#bfd9ff;border-top:1px solid #456;overflow:hidden}
.tabs{display:flex;height:27px;flex:none;padding-left:47px;gap:7px;color:#15428b}
.tabs button{height:27px;padding:0 11px 2px}
.tabs button.on{background:#e4eefb;border:1px solid #8db2e3;border-bottom:0;border-radius:3px 3px 0 0}
.docctl{margin-left:auto;display:flex;align-items:center;gap:14px;padding-right:7px;color:#667}
.docctl .q{width:14px;height:14px;border-radius:50%;background:#2a62d0;color:#fff;font:bold 11px/14px var(--ui);text-align:center}
.docctl .m{width:8px;height:2px;background:#667;margin-top:6px}
.docctl .r{width:9px;height:6px;border:1px solid #667;border-top-width:2px}
.docctl svg{width:9px;height:9px}
.ribbon{display:flex;gap:4px;height:107px;flex:none;padding:3px 13px 3px 2px;border:1px solid #8db2e3;border-radius:3px;background:linear-gradient(#dbe7f6,#c9daf0 20%,#d9e8f8 80%,#e3f4ff);margin:0 2px}
.grp{display:flex;flex-direction:column;border:1px solid #a5bfe0;border-radius:3px;box-shadow:inset 0 0 0 1px #ffffff80;flex:none}
.g1{width:71px}.g2{width:233px}.g3{width:164px}.g4{width:86px}.g5{width:115px}.g6{width:67px}.g7{width:123px}
.grp>p{height:19px;background:#c1d8f1;color:#3e6aaa;text-align:center;position:relative;line-height:18px;margin:0 1px}
.g1>p{padding-right:16px}
.grp>p svg{position:absolute;right:4px;top:4px;width:8px;height:8px}
.in{flex:1;display:flex;padding:2px;color:#15428b;min-height:0}
.in.col{flex-direction:column;padding:9px 2px 11px;justify-content:space-between}
.in.tight{padding:2px 3px}
.in.list{padding:0 2px 12px 5px}
.list button{display:flex;align-items:center;gap:3px;height:22px;white-space:nowrap}
.list svg{width:16px;height:16px}
.dd{display:inline-block;width:0;height:0;border:3px solid transparent;border-top:3px solid #5b7fb8;border-bottom:0;flex:none;margin:0 2px;vertical-align:middle}
.big{display:flex;flex-direction:column;align-items:center;width:42px;line-height:17px}
.big svg{width:30px;height:32px;flex:none}
.g7 .big{display:block;text-align:center;white-space:nowrap}
.g7 .big svg{margin:0 auto}
.paste .dd{margin-top:8px}
.stack{display:flex;flex-direction:column;width:22px;align-items:center}
.stack button{height:22px;display:flex;align-items:center;gap:3px}
.stack svg{width:15px;height:15px}
.ed{width:32px}
.rw{display:flex;gap:4px;height:22px}
.combo{background:#e9f1fb;border:1px solid #abc1de;color:#111;height:25px;display:flex;align-items:center;justify-content:space-between;padding:0 2px}
.combo.f{width:131px}.combo.s{width:46px;margin-left:-4px}.combo.w{width:79px}
.set{display:flex;border:1px solid #a0bbdf;border-radius:2px;height:22px;background:#d3e3f5}
.set button{width:22px;display:grid;place-items:center;color:#111}
.set .n{width:12px}
.set svg{width:16px;height:16px}
.set .on{background:linear-gradient(#fbd3a0,#fdb04c 40%,#fee08a)}
.ser{font-family:"Liberation Serif",serif;font-weight:bold;font-size:15px;color:#111}
.ser sup{font-size:8px;line-height:0;color:#36c}
.set .g,.set .k{display:block}
.g{font-size:16px}.k{font-size:13px}
.it{font-style:italic}.un{text-decoration:underline}
.set .fc{box-shadow:inset 0 -3px #e00;color:#26a;line-height:14px}
.set .wen{font-size:8px;line-height:8px;display:flex;flex-direction:column;align-items:center;justify-content:center}
.wen b{color:#36a;font-size:9px;line-height:12px}
.or{font:italic bold 10px/12px var(--ui)}
.ln i{width:14px;height:8px;background:repeating-linear-gradient(#000 0 2px,transparent 2px 3px)}
.ln.t i{margin-bottom:6px}.ln.b i{margin-top:6px}
.ln.l5 i{height:12px;clip-path:polygon(0 0,100% 0,100% 25%,70% 25%,70% 50%,100% 50%,100% 75%,70% 75%,70% 100%,0 100%)}
.ln.c i{clip-path:polygon(0 0,100% 0,100% 25%,85% 25%,85% 50%,100% 50%,100% 75%,85% 75%,85% 100%,15% 100%,15% 75%,0 75%,0 50%,15% 50%,15% 25%,0 25%)}
.ln.r i{clip-path:polygon(0 0,100% 0,100% 100%,30% 100%,30% 75%,0 75%,0 50%,30% 50%,30% 25%,0 25%)}
.solo{margin-left:auto;margin-right:11px}
.no2{border:0;background:none;margin-right:0}
.wide{width:79px;justify-content:space-between}
.fit{width:46px}
.set .dec{font:bold 9px/10px "Liberation Sans",sans-serif;display:block}
.warn{display:flex;height:43px;flex:none;padding:5px 0 5px 2px}
.warn>div{width:880px;height:33px;display:flex;align-items:center;background:linear-gradient(#f5faff,#e8f3fd);border:1px solid #a9c4e6;color:#15428b;padding-left:3px}
.warn div svg{width:14px;height:16px;margin-right:11px}
.warn span{margin:0 11px}
.warn button{width:70px;height:21px;background:#fff;border:1px solid #9db9de;line-height:17px}
.warn .x{width:9px;height:9px;margin:5px 0 0 7px;color:#778}
.fbar{display:flex;height:20px;flex:none;border:solid #7d9cc6;border-width:1px 0;background:#fff;font:14px/17px var(--mono)}
.fbar .name{width:158px;display:flex;padding:0 6px 0 57px;justify-content:space-between;align-items:center}
.fbar .name i{border:4px solid transparent;border-top:5px solid #000;border-bottom:0}
.fx{width:78px;background:#d5e3f5;border-radius:10px 0 0 10px;border-right:1px solid #7d9cc6;display:flex;justify-content:space-between;align-items:center;padding:0 5px}
.fx b{width:10px;height:10px;border-radius:50%;background:#b0c0d8}
.fx em{font-family:"Liberation Serif",serif;font-weight:bold;color:#456}
.fbar input{flex:1;padding-left:10px}
.fbar button{width:16px;background:#d5e3f5;display:grid;place-items:center}
.fbar button svg{width:9px;height:11px}
.sheetwrap{flex:1;min-height:0;display:flex;border-top:1px solid #7d9cc6;margin-top:2px;background:#fff;overflow:hidden}
.sheet{border-collapse:collapse;table-layout:fixed;width:888px;flex:none;align-self:flex-start}
.k0{width:33px}.ka{width:58px}.kb{width:37px}.kc{width:166px}.kd{width:31px}.ke{width:81px}.kf{width:54px}.kg{width:49px}.kh{width:89px}.ki{width:139px}.kj{width:88px}.kk{width:63px}
.sheet thead th{height:20px;background:linear-gradient(#f2f6fb,#d5dee9);border:1px solid #9eb6ce;font:15px/16px "Liberation Serif",serif;padding:0;color:#234}
.sheet thead .cn{background:linear-gradient(135deg,#a9c4e9 60%,#e4ecf7 60%)}
.sheet thead .hot{background:#fbc36c}
.sheet tbody th{background:#e4ecf7;border:1px solid #9eb6ce;vertical-align:bottom;font:14px/17px var(--mono);color:#456;padding:0}
.sheet tbody th.hot{background:#ffcf86}
.sheet tbody tr{height:40px}
.sheet tbody .h44{height:44px}.sheet tbody .h38{height:38px}
.sheet td{border:1px solid #000;padding:0 0 0 3px;font:bold 14px/16px var(--mono);white-space:nowrap;overflow:visible}
.sheet .h44 td{border-top-color:#9eb6ce}
.sheet td.off{border-color:#d0d7e5;border-left-color:#000;border-right:0}
.sheet td.no{border:1px solid #000;text-align:center;padding:0;font-size:15px}
.sheet .cap{text-align:center;font-size:16px;line-height:19px;padding:0;border-left:0}
.sheet .rd{color:#d81010}
.sheet .act{outline:3px double #000;outline-offset:-1px;font-weight:normal;padding-left:2px}
.sheet a{color:#800080}
.xs{width:16px;background:#7b9ac8;border-left:1px solid #cde;flex:1;display:flex;flex-direction:column;align-items:center}
.xs .split{width:12px;height:7px;background:#eef4fc;border:1px solid #7d9cc6}
.xs i{margin-top:8px;border:4px solid transparent;border-bottom:5px solid #445;border-top:0}
.xs .th{margin-top:44px;width:14px;height:222px;border:1px solid #6180b0;background:repeating-linear-gradient(#667 0 1px,transparent 1px 3px) center/8px 9px no-repeat,linear-gradient(90deg,#e8effa,#c3cfe0)}

.mark{position:absolute;left:294px;top:616px;width:332px;height:63px;border:4px solid #ff0;filter:drop-shadow(3px 3px 3px #0009)}
.arrow{position:absolute;left:518px;top:518px;width:60px;height:100px}
.lang{position:absolute;left:1779px;top:933px;width:79px;height:26px;background:linear-gradient(#8a8f94,#3c4044 50%,#2a2d30);color:#fff;display:flex;align-items:center;gap:7px;font:11px/12px var(--mono);padding:0 5px}
.lang .grip{width:8px;height:18px;background:radial-gradient(#222 1px,transparent 1px) 0 0/4px 4px}
.lang b{width:14px;height:14px;border-radius:50%;background:#1b35c8;text-align:center;font:bold 11px/14px var(--ui)}
.lang em{font:7px/10px var(--ui);margin-left:auto;text-align:center}
.ime{position:absolute;left:1755px;top:1011px;width:162px;height:28px;display:flex;align-items:center;gap:5px;color:#334;font:16px/20px var(--ui);background:linear-gradient(90deg,transparent 18px,#fff 18px);border-radius:4px}
.ime svg{width:16px;height:16px}
.ime svg.s{width:27px;height:30px}
.ime .moon{width:14px;height:14px;border-radius:50%;background:#40465e;flex:none}
.ime span{width:17px;flex:none}
```

FILE: app.js
```js
// Layer list: name, background, swatch, hand flag
const W = '#fff', G = '#00a67d', O = '#ffc64d', C = '#9bdbdb';
const groups = [
  [['to1', W, '', 0], ['to', W, '', 1], ['ts', G, '', 1], ['cs', O, '', 1], ['sig2t', O, '', 1], ['sig3b', O, '', 1], ['sig4t', O, '', 1], ['sig5b', O, '', 1], ['sig6t', O, '', 1], ['sig7b', O, '', 1], ['ss', O, '', 1], ['bs', G, '', 1], ['bo', W, '', 1]],
  [['drl', '#9cb4c0', '', 0], ['rout', '#d8d8d8', '', 0]],
  ['dd*', 'panel*', 'tp', 'bp', 'ydkdrl', 'npth', 'cvia', 'biaozhu', 'datecode-pte', 'd', 'dwk', 'dwkby', 'clamp_area', 'cs_clampline', 'ss_clampline', 'to.d*', 'ts.d*', 'cs.d*', 'sig2t.d*', 'sig3b.d*', 'sig4t.d*', 'sig5b.d*', 'sig6t.d*', 'sig7b.d*', 'ss.d*', 'bs.d*', 'bo.d*', 'drl.d', 'rout.d', 'dd.d*', 'panel.d*']
    .map(n => [n.replace('*', ''), C, { 'to.d*': '#0020ff', 'ts.d*': '#419600', 'drl.d': '#f00' }[n] || '', n.endsWith('*')])
];
document.getElementById('layers').innerHTML = groups.map(g => '<div class="grpx">' + g.map(([n, bg, sw, hand]) =>
  `<label class="layer" style="--bg:${bg};--sw:${sw || '#000'}"><input type="checkbox"${n === 'drl.d' ? ' checked' : ''}><i></i><span>${n}${hand ? '<svg><use href="#hand"/></svg>' : n === 'drl.d' ? '<b class="sq"></b>' : ''}</span></label>`).join('') + '</div>').join('');

// Drill table: count, type, finish size, tolerance, drill size
const P = 'Plated', V = 'Via', N = 'NPlated';
const tools = [[6, P, 140, 3, '143.701'], [24, P, 91, 3, '94.488'], [4, P, 71, 3, '74.803'], [18, P, 44, 3, '47.244'], [28, P, 40, 3, '43.307'], [134, P, 28, 3, '31.496'], [19, P, 22, 3, '25.591'], [134, V, 12, 0, '13.78'], [2794, V, 10, 0, '9.843'], [1520, V, 8, 0, '7.874'], [4, N, 158, 2, '157.48'], [4, N, 93, 2, '92.52'], [4, N, 80, 2, '80.709'], [1, N, 75, 2, '74.803'], [1, N, 73, 2, '72.835'], [4, N, 67, 2, '66.929'], [1, N, 63, 2, '62.992'], [2, N, 56, 2, '55.118'], [1, N, 54, 2, '53.15'], [1, N, 52, 2, '51.181'], [1, N, 44, 2, '43.307']];
const inp = (v, l) => `<input class="beam" value="${v}" aria-label="${l}">`;
document.getElementById('toolrows').innerHTML = tools.map(([c, t, f, tol, d], i) => {
  const id = 'T' + String(i + 1).padStart(2, '0');
  const foc = i === 16;
  return `<tr><td><svg viewBox="0 0 18 24"><path fill="#fff" stroke="#000" d="M.5.5h17v23H.5z"/><path stroke="#000" d="M3 13.500h12M8.500 6v15M11.500 1v8h6"/><text x="12" y="8" font-size="8" fill="#000">${String.fromCharCode(65 + i)}</text></svg></td>
  <td><button class="${id === 'T06' ? 'sel' : ''}">${id}</button></td><td class="n">${c}</td>
  <td class="w${foc ? ' foc' : ''}">${foc ? '<input aria-label="Slot length">' : inp('', 'Slot length')}</td>
  <td class="y ty"><select aria-label="Type"><option>${t}</option></select></td>
  <td class="y">${inp(f, 'Finish size')}</td><td class="y">${inp(tol, 'Plus tolerance')}</td><td class="y">${inp(tol, 'Minus tolerance')}</td>
  <td class="w">${inp(d, 'Drill size')}</td><td class="w">${inp('', 'Drill designator')}</td></tr>`;
}).join('');

// Circuit board
let seed = 11;
const rnd = () => (seed = (seed * 16807) % 2147483647) / 2147483647;
const R = n => Math.floor(rnd() * n);
let s = '';
const rect = (x, y, w, h, f, st) => { s += `<rect x="${x}" y="${y}" width="${w}" height="${h}" fill="${f}"${st ? ` stroke="${st}"` : ''}/>`; };
const path = (d, st, f = 'none') => { s += `<path d="${d}" stroke="${st}" fill="${f}"/>`; };
const circ = (x, y, r, f, st) => { s += `<circle cx="${x}" cy="${y}" r="${r}" fill="${f}" stroke="${st || 'none'}"/>`; };
const BL = '#1020d8', GR = '#419600', YE = '#bf9600', CY = '#4f9fc8', RE = '#e01020';
path('M1092 190H470q-8 2-8 15h60v10', '#fff');
path('M467 342V226q0-8 8-11h47', '#8a3c14');
path('M467 226q1-9 8-10', '#fff');
path('M522 215h536q6 2 7 9v20q0 6 6 6h21', '#60a8e0');
for (const x of [564, 842]) path(`M${x} 196h20v-4l8 6-8 7v-5h-20z`, '#0020ff', '#0020ff');
circ(536, 200, 5, YE, '#a03010');
for (let i = 0; i < 620; i++) {
  const x = 470 + R(620), y = 268 + R(74), k = R(10);
  if (k < 3) rect(x, y, 2, 2, RE);
  else if (k < 6) { rect(x, y, 3, 5, CY); rect(x + 4, y, 3, 5, GR); }
  else if (k < 8) rect(x, y, 3 + R(10), 4 + R(8), 'none', BL);
  else if (k < 9) { rect(x, y, 6, 4, GR); rect(x, y + 5, 6, 3, CY); }
  else rect(x, y, 2, 2, '#b030c0');
}
for (let i = 0; i < 160; i++) rect(470 + R(600), 268 + R(74), 2, 2, RE);
for (const [x, y, w, h] of [[512, 268, 14, 16], [527, 268, 15, 16], [582, 287, 13, 14], [582, 303, 13, 14], [628, 269, 13, 18], [658, 270, 14, 18], [595, 324, 20, 18], [1054, 273, 16, 22], [1054, 298, 14, 18], [890, 280, 16, 16]]) {
  rect(x, y, w, h, '#000', BL); rect(x + 1, y + 1, w / 2 - 2, h - 3, GR); rect(x + w / 2 + 1, y + 1, w / 2 - 2, h - 3, GR); rect(x + 1, y + h / 2, w - 2, 2, CY);
}
const chip = (x, y, w, h, vert) => {
  rect(x, y, w, h, '#000', BL);
  if (vert) for (let i = 4; i < w - 6; i += 8) { rect(x + i, y + 1, 5, 7, GR); rect(x + i, y + h - 8, 5, 7, GR); }
  else for (let i = 4; i < h - 3; i += 6) { rect(x + 3, y + i, 7, 3, GR); rect(x + w - 10, y + i, 7, 3, GR); }
};
chip(665, 306, 44, 38, 1); chip(754, 270, 33, 16); chip(550, 326, 38, 18); chip(933, 229, 36, 25);
rect(908, 291, 97, 46, '#000', BL); for (let i = 0; i < 8; i++) { path(`M909 ${292 + i * 5}l18 15M988 ${292 + i * 5}l16 15`, BL); }
rect(927, 291, 60, 46, '#000', BL); chip(934, 298, 46, 30);
rect(765, 297, 31, 28, '#000', BL); rect(767, 299, 9, 7, GR); rect(785, 299, 9, 7, GR); rect(767, 316, 9, 7, GR); rect(785, 316, 9, 7, GR);
for (const x of [896, 915, 944, 958]) rect(x, 270, 7, 18, GR, BL);
for (let i = 0; i < 5; i++) { rect(840 + i * 8, 308, 6, 17, GR, BL); rect(884 + i * 6, 310, 4, 12, GR); }
rect(723, 308, 28, 32, '#000', BL); for (const [x, y] of [[731, 315], [743, 315], [731, 327], [743, 327]]) { rect(x - 4, y - 4, 8, 8, GR); circ(x, y, 3, YE); }
rect(732, 289, 18, 17, '#0020ff');
rect(509, 217, 129, 50, '#000', BL); rect(638, 217, 281, 50, '#000', BL); path('M640 217v50', BL);
// Connector pads, in groups with a locating hole between them
const pads = []; for (let x = 526; x < 901; x += 10) if (!(x > 576 && x < 590) && !(x > 620 && x < 652) && !(x > 704 && x < 716)) pads.push(x);
let z = 'M526 232'; pads.forEach(x => { z += `L${x + 5} 222L${x + 10} 232`; }); path(z, '#fff'); path('M526 232v12h372l-2 10H531', '#fff');
pads.forEach((x, i) => { [[x + 5, 222], [x, 232], [x, 244], [x + 5, 254]].forEach(([a, b]) => { rect(a - 3, b - 2, 6, 5, GR); rect(a - 1, b - 2, 3, 4, i % 3 ? '#4a78c8' : '#8068c8'); }); });
for (const x of [584, 629, 711, 909]) circ(x, 238, 6, YE, GR);
circ(483, 238, 7, GR); circ(487, 277, 19, GR); circ(487, 277, 9, YE);
path('M521 298h14l10 10v16l-10 10h-14l-10-10v-16z', BL, '#000'); circ(528, 316, 15, GR); circ(528, 316, 9, YE);
for (const [x, y] of [[994, 226], [1014, 226], [994, 253], [1014, 253]]) { if (y === 226 && x === 1014) rect(1008, 219, 13, 14, GR); circ(x, y, 7, GR); circ(x, y, 4, YE); }
circ(1041, 237, 11, 'none', '#4f8fd0'); rect(989, 263, 11, 18, GR, BL); rect(1013, 263, 11, 18, GR, BL);
rect(1060, 304, 32, 40, '#000', BL); rect(1060, 312, 11, 18, GR);
rect(925, 224, 7, 14, GR, CY); rect(925, 246, 7, 12, GR, CY); rect(972, 225, 7, 14, GR, CY);
for (let x = 920; x < 932; x += 3) for (let y = 239; y < 246; y += 3) rect(x, y, 2, 2, RE);
for (let x = 981; x < 1072; x += 4) rect(x, 282, 2, 2, RE);
for (const a of [525, 742, 1028]) for (let x = a; x < a + 26; x += 5) rect(x, 214, 2, 2, '#d05878');
s += `<g fill="#1020d8" font-family="Liberation Mono" font-size="9"><text x="790" y="275">J_PCIESLOT1</text><text x="848" y="279">LED4</text><text x="974" y="291">JPU3</text><text transform="translate(476 263) rotate(-90)">J_PCIESLOT2</text><text transform="translate(474 335) rotate(-90)">TPU6</text></g>`;
document.getElementById('board').innerHTML = s;
```
